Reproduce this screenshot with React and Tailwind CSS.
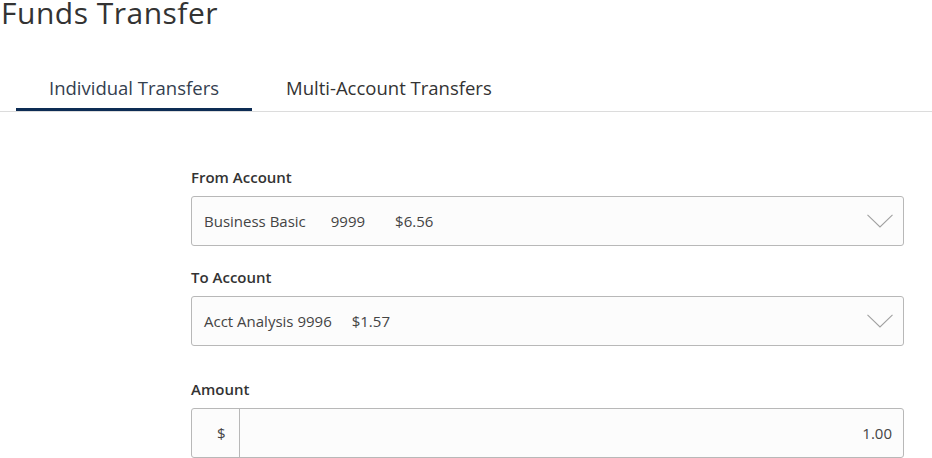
import React from "react";

function Chevron() {
  return (
    <svg width="26" height="14" viewBox="0 0 26 14" fill="none" className="shrink-0">
      <path d="M0.5 0.8 L13 13 L25.5 0.8" stroke="#a0a0a0" strokeWidth="1.1" />
    </svg>
  );
}

function Label({ children, className = "" }) {
  return (
    <div className={"text-[15px] leading-[20px] font-semibold text-[#333] mb-[9px] " + className}>
      {children}
    </div>
  );
}

function SelectBox({ children }) {
  return (
    <div className="h-[50px] w-full rounded-[3px] border border-[#b8b8b8] bg-[#fcfcfc] flex items-center justify-between pl-[12px] pr-[10px]">
      <div className="flex items-center text-[15px] text-[#444]">{children}</div>
      <Chevron />
    </div>
  );
}

export default function App() {
  return (
    <div
      className="w-[932px] h-[458px] overflow-hidden bg-white"
      style={{ fontFamily: '"Open Sans", "Noto Sans", sans-serif' }}
    >
      <h1 className="text-[30px] leading-[25px] tracking-[0.5px] text-[#333] font-normal pl-[1px]">
        Funds Transfer
      </h1>
      <div className="mt-[51px] flex border-b border-[#dcdcdc] pl-[16px]">
        <div className="px-[33px] pb-[8px] border-b-[3px] border-[#0d2c54] text-[18.5px] leading-[24px] text-[#34404f]">
          Individual Transfers
        </div>
        <div className="px-[34px] pb-[11px] text-[18.5px] leading-[24px] text-[#333]">
          Multi-Account Transfers
        </div>
      </div>
      <div className="ml-[191px] w-[713px] mt-[55px]">
        <Label>From Account</Label>
        <SelectBox>
          <span>Business Basic</span>
          <span className="ml-[25px]">9999</span>
          <span className="ml-[30px]">$6.56</span>
        </SelectBox>
        <Label className="mt-[21px]">To Account</Label>
        <SelectBox>
          <span>Acct Analysis 9996</span>
          <span className="ml-[20px]">$1.57</span>
        </SelectBox>
        <Label className="mt-[33px]">Amount</Label>
        <div className="h-[50px] w-full rounded-[3px] border border-[#b8b8b8] bg-[#fcfcfc] flex items-stretch text-[15px] text-[#444]">
          <div className="w-[48px] border-r border-[#b8b8b8] flex items-center pl-[25px]">$</div>
          <div className="flex-1 flex items-center justify-end pr-[11px]">1.00</div>
        </div>
      </div>
    </div>
  );
}
